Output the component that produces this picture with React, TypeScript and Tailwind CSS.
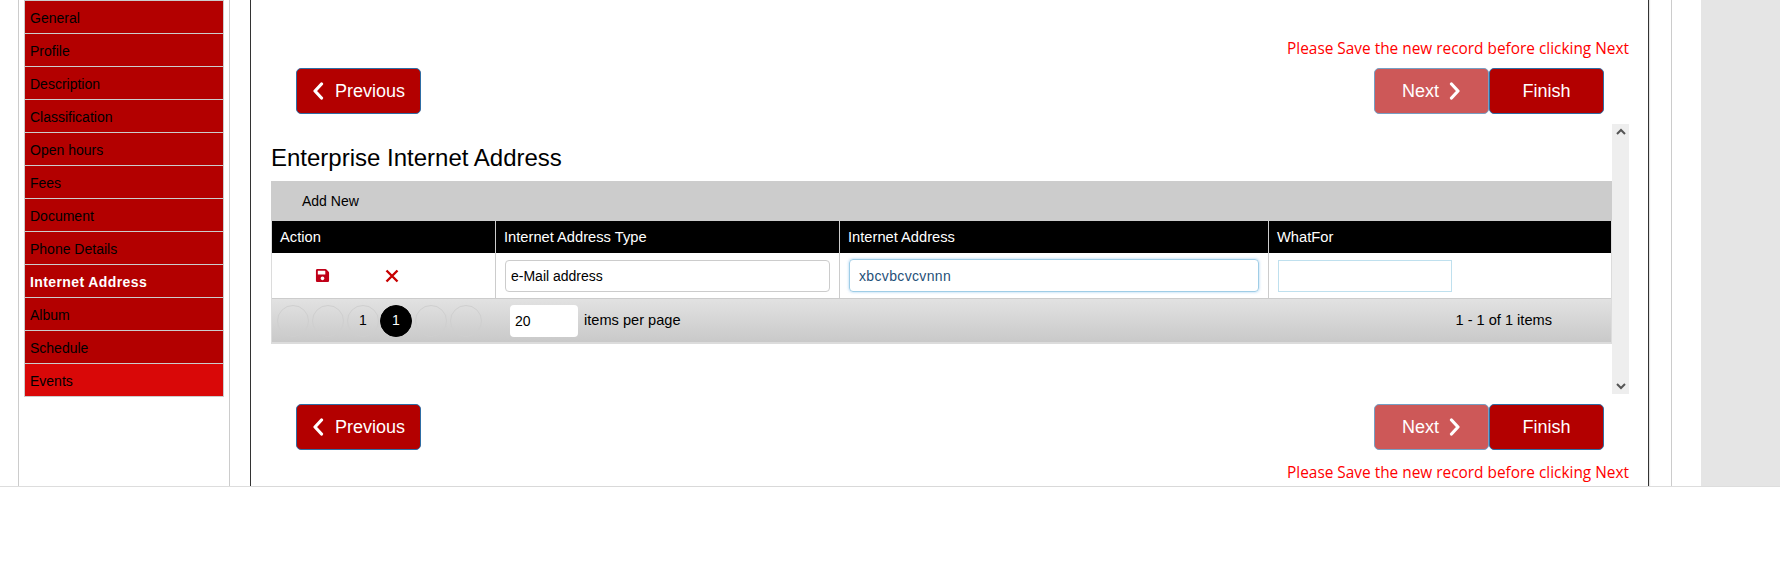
import React from 'react';
import { FaSave } from 'react-icons/fa';

const tabs = ['General', 'Profile', 'Description', 'Classification', 'Open hours', 'Fees', 'Document', 'Phone Details', 'Internet Address', 'Album', 'Schedule', 'Events'];

const Chevron: React.FC<{ dir: 'left' | 'right' }> = ({ dir }) => (
  <svg width="12" height="18" viewBox="0 0 12 18" className="shrink-0">
    <polyline
      points={dir === 'left' ? '9.5,2 3,9 9.5,16' : '2.5,2 9,9 2.5,16'}
      fill="none"
      stroke="white"
      strokeWidth="3.2"
      strokeLinecap="round"
      strokeLinejoin="round"
    />
  </svg>
);

const Message = () => (
  <div className="h-[20px] pr-[19px] text-right text-[15.4px] leading-[20px] text-[#ff0000] [font-family:'Open_Sans',sans-serif]">
    Please Save the new record before clicking Next
  </div>
);

const NavButtons = () => (
  <div className="flex h-[46px] justify-between pl-[45px] pr-[44px]">
    <button className="flex w-[125px] items-center justify-center gap-[11px] rounded-[5px] border border-[#2e6da4] bg-[#b30000] text-[18px] text-white">
      <Chevron dir="left" />
      Previous
    </button>
    <div className="flex">
      <button className="flex w-[115px] items-center justify-center gap-[10px] rounded-[5px] border border-[#2e6da4] bg-[#b30000] text-[18px] text-white opacity-65">
        Next
        <Chevron dir="right" />
      </button>
      <button className="w-[115px] rounded-[5px] border border-[#2e6da4] bg-[#b30000] text-[18px] text-white">Finish</button>
    </div>
  </div>
);

const PageCircle: React.FC<{ label?: string; active?: boolean }> = ({ label, active }) => (
  <span className={`flex h-[32px] w-[32px] items-center justify-center rounded-full border text-[14px] ${active ? '-ml-[2px] border-black bg-black text-white' : 'border-[#cfcfcf] text-black'}`}>
    {label}
  </span>
);

const HeaderCell: React.FC<{ label: string; className?: string }> = ({ label, className }) => (
  <div className={`flex items-center pl-[8px] text-[14.7px] text-white ${className ?? ''}`}>{label}</div>
);

const App: React.FC = () => {
  return (
    <div className="h-[561px] w-[1780px] overflow-hidden bg-white font-['Liberation_Sans',Arial,sans-serif] text-black">
      <div className="flex h-[487px] border-b border-[#dddddd]">
        <aside className="ml-[18px] w-[212px] shrink-0 border-x border-[#cccccc] pl-[5px] pr-[5px]">
          <ul className="w-[200px] border-x border-b border-[#cccccc]">
            {tabs.map((tab) => (
              <li
                key={tab}
                className={`flex h-[33px] items-center border-t border-[#cccccc] pl-[5px] pt-[2px] text-[14px] ${
                  tab === 'Events' ? 'bg-[#d90808]' : 'bg-[#b30000]'
                } ${tab === 'Internet Address' ? 'font-bold tracking-[0.4px] text-white' : 'text-black'}`}
              >
                {tab}
              </li>
            ))}
          </ul>
        </aside>

        <main className="ml-[20px] w-[1399px] shrink-0 border-x border-[#333333] pt-[39px] shadow-[1px_0_1px_rgba(0,0,0,0.1)]">
          <Message />
          <div className="mt-[9px]">
            <NavButtons />
          </div>

          <section className="mt-[10px] ml-[20px] flex h-[270px] w-[1358px]">
            <div className="w-[1341px]">
              <h3 className="flex h-[57px] items-end pb-[9px] text-[24px] leading-[28px]">Enterprise Internet Address</h3>
              <div className="border-x border-b-2 border-[#dcdcdc]">
                <div className="-mx-px flex h-[40px] items-center bg-[#cccccc] pl-[31px] text-[14px]">Add New</div>
                <div className="grid h-[32px] grid-cols-[223px_344px_429px_1fr] bg-black">
                  <HeaderCell label="Action" />
                  <HeaderCell label="Internet Address Type" className="border-l border-[#cccccc]" />
                  <HeaderCell label="Internet Address" className="border-l border-[#cccccc]" />
                  <HeaderCell label="WhatFor" className="border-l border-[#cccccc]" />
                </div>
                <div className="grid h-[46px] grid-cols-[223px_344px_429px_1fr] border-b border-[#cccccc]">
                  <div className="flex items-center pl-[43px] text-[#c00018]">
                    <FaSave size={15} />
                    <svg width="16" height="16" viewBox="0 0 16 16" className="ml-[54px]">
                      <path d="M2.5 2.5 13.5 13.5M13.5 2.5 2.5 13.5" stroke="#c80000" strokeWidth="2.4" fill="none" />
                    </svg>
                  </div>
                  <div className="flex items-center border-l border-[#cccccc] pl-[9px]">
                    <div className="flex h-[32px] w-[325px] items-center rounded-[4px] border border-[#cccccc] pl-[5px] pt-[1px] text-[14px]">e-Mail address</div>
                  </div>
                  <div className="flex items-center border-l border-[#cccccc] pl-[9px]">
                    <div className="flex h-[33px] w-[410px] items-center rounded-[4px] border border-[#9fcde6] pl-[9px] pt-[1px] text-[14px] tracking-[0.35px] text-[#1f4f78] shadow-[0_0_3px_rgba(102,175,233,0.6)]">xbcvbcvcvnnn</div>
                  </div>
                  <div className="flex items-center border-l border-[#cccccc] pl-[9px]">
                    <div className="h-[32px] w-[174px] border border-[#bfe0ee]" />
                  </div>
                </div>
                <div className="flex h-[43px] items-center bg-gradient-to-b from-[#e2e2e2] to-[#c9c9c9] pl-[5px] text-[14.6px]">
                  <div className="flex gap-[3px]">
                    <PageCircle />
                    <PageCircle />
                    <PageCircle label="1" />
                    <PageCircle label="1" active />
                    <PageCircle />
                    <PageCircle />
                  </div>
                  <div className="ml-[28px] flex h-[32px] w-[68px] items-center rounded-[4px] bg-white pl-[5px] pt-[1px] text-[14px]">20</div>
                  <span className="ml-[6px] pt-[1px]">items per page</span>
                  <span className="ml-auto pr-[59px] pt-[1px]">1 - 1 of 1 items</span>
                </div>
              </div>
            </div>
            <div className="flex w-[17px] flex-col items-center justify-between bg-[#eeeeee] py-[4px]">
              <svg width="10" height="8" viewBox="0 0 10 8">
                <polyline points="1,6 5,2 9,6" fill="none" stroke="#555555" strokeWidth="2" />
              </svg>
              <svg width="10" height="8" viewBox="0 0 10 8">
                <polyline points="1,2 5,6 9,2" fill="none" stroke="#555555" strokeWidth="2" />
              </svg>
            </div>
          </section>

          <div className="mt-[10px]">
            <NavButtons />
          </div>
          <div className="mt-[13px]">
            <Message />
          </div>
        </main>

        <div className="ml-[22px] w-[30px] shrink-0 border-l border-[#cccccc]" />
        <div className="flex-1 bg-[#e5e5e5]" />
      </div>
    </div>
  );
};

export default App;
